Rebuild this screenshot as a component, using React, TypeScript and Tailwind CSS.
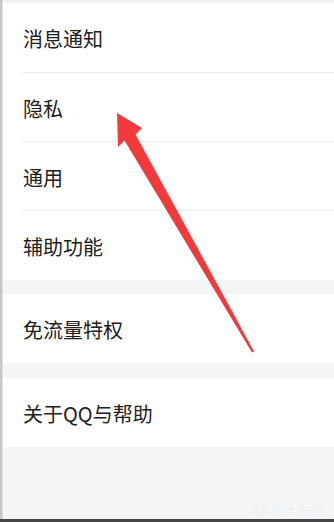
import React from "react";

const font = { fontFamily: '"Noto Sans CJK SC", "Noto Sans", sans-serif' };

function Row({ label, h }: { label: string; h: string }) {
  return (
    <div className={`flex items-center pl-5 pt-[3px] ${h}`}>
      <span className="text-[20px] leading-none text-[#202020]">{label}</span>
    </div>
  );
}

function Divider() {
  return <div className="ml-[19px] h-px bg-[#ececec]" />;
}

export default function App() {
  return (
    <div className="relative flex h-[522px] w-[334px] flex-col overflow-hidden bg-[#f4f5f7]" style={font}>
      <div className="flex flex-1">
        {/* left edge strip */}
        <div className="w-[2px] bg-[#c6c6c6]" />
        <div className="w-px bg-[#e2e2e2]" />
        <div className="flex flex-1 flex-col">
          <div className="h-[3px] bg-[#f2f3f5]" />
          <div className="bg-white">
            <Row label="消息通知" h="h-[69px]" />
            <Divider />
            <Row label="隐私" h="h-[68px]" />
            <Divider />
            <Row label="通用" h="h-[68px]" />
            <Divider />
            <Row label="辅助功能" h="h-[69px]" />
          </div>
          <div className="h-[14px]" />
          <div className="bg-white">
            <Row label="免流量特权" h="h-[69px]" />
          </div>
          <div className="h-[15px]" />
          <div className="bg-white">
            <Row label="关于QQ与帮助" h="h-[69px]" />
          </div>
          <div className="flex flex-1 items-end justify-end pb-[3px] pr-[6px]">
            <span className="text-[13px] leading-none tracking-[1px] text-white [text-shadow:0_0_1px_#c8ccd2]">
              ◎ 悟空问答
            </span>
          </div>
        </div>
      </div>
      <div className="h-[3px] bg-[#454545]" />

      {/* red arrow overlay */}
      <svg className="pointer-events-none absolute left-0 top-0" width="334" height="522" viewBox="0 0 334 522">
        <polygon
          points="117,113 142,128 135.5,134.5 254,351.5 252,352.5 124.5,140.5 118,147"
          fill="#f23a3c"
        />
      </svg>
    </div>
  );
}
